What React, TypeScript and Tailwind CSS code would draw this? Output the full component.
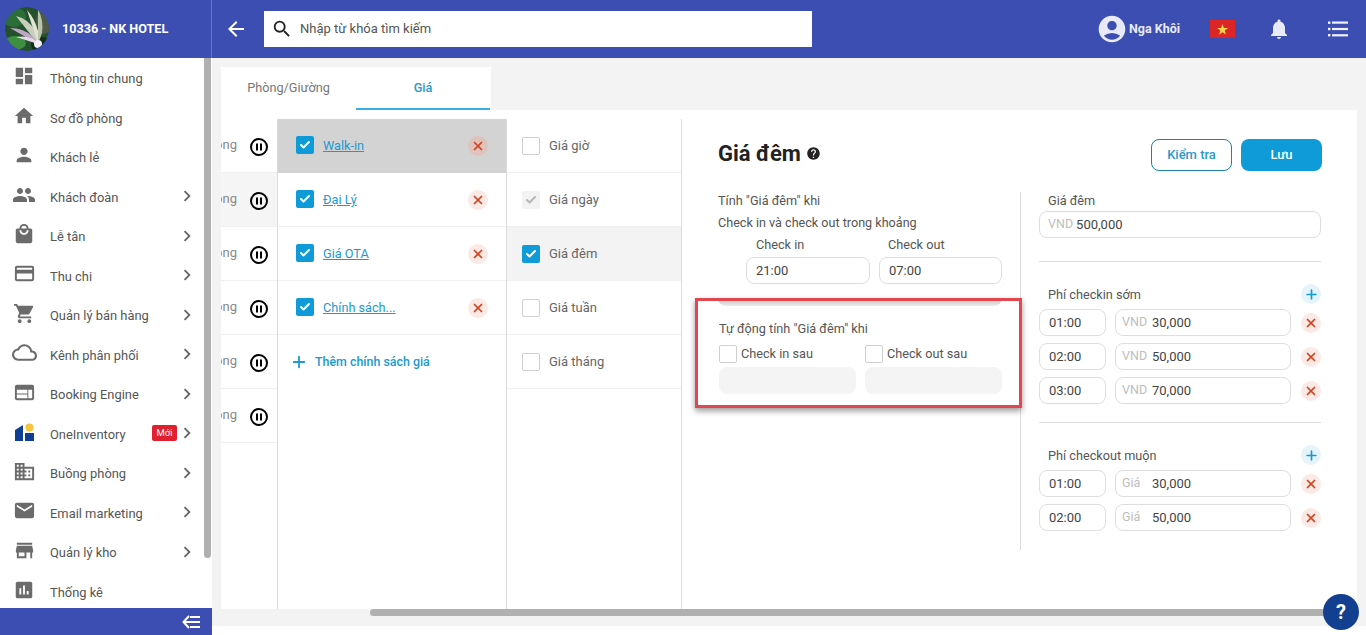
import React from "react";
import {
  MdDashboard, MdHome, MdPerson, MdPeople, MdLocalMall, MdCreditCard, MdShoppingCart,
  MdCloudQueue, MdWeb, MdDomain, MdEmail, MdStore, MdAssessment, MdArrowBack, MdSearch,
  MdAccountCircle, MdNotifications, MdChevronRight, MdHelp,
} from "react-icons/md";
import { Check as CheckIcon, X, Plus } from "lucide-react";

const Inventory = () => (
  <svg width="19" height="18" viewBox="0 0 19 18">
    <path d="M0 7 L8 2 V18 H0 Z" fill="#0f3f94" />
    <rect x="10" y="10" width="9" height="8" fill="#0f3f94" />
    <circle cx="14.5" cy="4.5" r="4" fill="#f6c63c" />
  </svg>
);

const menu: [React.ReactNode, string, boolean][] = [
  [<MdDashboard size={22} />, "Thông tin chung", false],
  [<MdHome size={22} />, "Sơ đồ phòng", false],
  [<MdPerson size={22} />, "Khách lẻ", false],
  [<MdPeople size={24} />, "Khách đoàn", true],
  [<MdLocalMall size={22} />, "Lễ tân", true],
  [<MdCreditCard size={23} />, "Thu chi", true],
  [<MdShoppingCart size={23} />, "Quản lý bán hàng", true],
  [<MdCloudQueue size={25} />, "Kênh phân phối", true],
  [<MdWeb size={23} />, "Booking Engine", true],
  [<Inventory />, "OneInventory", true],
  [<MdDomain size={23} />, "Buồng phòng", true],
  [<MdEmail size={23} />, "Email marketing", true],
  [<MdStore size={23} />, "Quản lý kho", true],
  [<MdAssessment size={22} />, "Thống kê", false],
];

const Avatar = () => (
  <svg width="44" height="44" viewBox="0 0 44 44" className="rounded-full">
    <circle cx="22" cy="22" r="22" fill="#24502c" />
    <ellipse cx="9" cy="10" rx="12" ry="10" fill="#2c6e3a" />
    <ellipse cx="37" cy="38" rx="11" ry="8" fill="#10301a" />
    <ellipse cx="10" cy="36" rx="11" ry="7" fill="#3f8f42" />
    <ellipse cx="39" cy="14" rx="8" ry="13" fill="#4f5a48" />
    <path d="M33 37 L11 9 Q24 12 30 24 Z" fill="#c9cdbe" />
    <path d="M33 37 L22 3 Q30 12 33 24 Z" fill="#dfe3d2" />
    <path d="M33 37 L33 2 Q39 14 37 26 Z" fill="#b9c4ab" />
    <path d="M33 37 L5 21 Q18 21 27 29 Z" fill="#bfa6c6" />
    <path d="M33 37 L11 30 Q22 28 30 33 Z" fill="#e5d6ea" />
    <circle cx="33" cy="37" r="4" fill="#f4eef6" />
  </svg>
);

const Pause = () => (
  <svg width="18" height="18" viewBox="0 0 18 18" className="ml-[13px] mt-[2px] shrink-0" fill="none" stroke="#000" strokeWidth="2">
    <circle cx="9" cy="9" r="8" />
    <path d="M7 5.5 V12.5 M11 5.5 V12.5" />
  </svg>
);

const Check = ({ state = "off" }: { state?: "off" | "on" | "dis" }) => {
  if (state === "on")
    return (
      <span className="flex h-[18px] w-[18px] shrink-0 items-center justify-center rounded-[2px] bg-[#0e9bd8] text-white">
        <CheckIcon size={12} strokeWidth={4} />
      </span>
    );
  if (state === "dis")
    return (
      <span className="flex h-[18px] w-[18px] shrink-0 items-center justify-center rounded-[2px] bg-[#f3f3f3] text-[#b5b5b5]">
        <CheckIcon size={12} strokeWidth={4} />
      </span>
    );
  return <span className="block h-[18px] w-[18px] shrink-0 rounded-[2px] border border-[#cfcfcf] bg-white" />;
};

const XBtn = ({ dark }: { dark?: boolean }) => (
  <span className={`flex h-[20px] w-[20px] shrink-0 items-center justify-center rounded-full text-[#d2431f] ${dark ? "bg-[#e0c2bc]" : "bg-[#fbe9e5]"}`}>
    <X size={14} strokeWidth={3} />
  </span>
);

const PlusBtn = () => (
  <span className="flex h-[20px] w-[20px] items-center justify-center rounded-full bg-[#e5f4fa] text-[#0e9bd8]">
    <Plus size={15} strokeWidth={2.6} />
  </span>
);

const TimeBox = ({ v, w }: { v: string; w: string }) => (
  <div className={`flex h-[27px] shrink-0 items-center rounded-lg border border-[#dedede] bg-white px-[9px] text-[13px] text-[#444] ${w}`}>{v}</div>
);

const FeeRow = ({ t, u, v }: { t: string; u: string; v: string }) => (
  <div className="flex items-center">
    <TimeBox v={t} w="w-[67px]" />
    <div className="ml-[9px] flex h-[27px] w-[177px] items-center rounded-lg border border-[#dedede] bg-white pl-[6px] text-[13px]">
      <span className="w-[30px] text-[12.5px] text-[#bdbdbd]">{u}</span>
      <span className="text-[#444]">{v}</span>
    </div>
    <span className="ml-[10px]"><XBtn /></span>
  </div>
);

const policies = ["Walk-in", "Đại Lý", "Giá OTA", "Chính sách..."];
const prices: [string, "off" | "on" | "dis"][] = [
  ["Giá giờ", "off"], ["Giá ngày", "dis"], ["Giá đêm", "on"], ["Giá tuần", "off"], ["Giá tháng", "off"],
];

export default function App() {
  return (
    <div className="relative flex h-[635px] w-[1366px] flex-col overflow-hidden bg-white font-['Roboto',sans-serif] text-[13px] text-[#555]">
      {/* Top bar */}
      <header className="flex h-[58px] shrink-0 items-center bg-[#3c4eb2] text-white">
        <div className="flex h-full w-[212px] shrink-0 items-center border-r border-[#5f78d6] pl-[5px]">
          <Avatar />
          <span className="ml-[13px] text-[12.6px] font-bold">10336 - NK HOTEL</span>
        </div>
        <div className="ml-[12px]"><MdArrowBack size={24} /></div>
        <div className="ml-[16px] flex h-[36px] w-[548px] items-center bg-white pl-[7px] text-[#555]">
          <MdSearch size={22} className="text-[#222]" />
          <span className="ml-[7px]">Nhập từ khóa tìm kiếm</span>
        </div>
        <div className="ml-auto flex items-center pr-[16px]">
          <MdAccountCircle size={32} className="text-[#e8ebf7]" />
          <span className="ml-px w-[51px] whitespace-nowrap text-[12.5px] font-bold text-[#e8ebf7]">Nga Khôi</span>
          <svg width="25" height="18" viewBox="0 0 25 18" className="ml-[30px]">
            <rect width="25" height="18" fill="#dc2626" />
            <path d="M12.5 4 L13.9 8 L18 8.1 L14.7 10.6 L15.9 14.5 L12.5 12.2 L9.1 14.5 L10.3 10.6 L7 8.1 L11.1 8 Z" fill="#fcd34d" />
          </svg>
          <MdNotifications size={24} className="ml-[32px] text-[#e8ebf7]" />
          <svg width="24" height="24" viewBox="0 0 24 24" className="ml-[35px]" fill="#f1f3fb">
            <rect x="2" y="4.5" width="2.4" height="2.4" />
            <rect x="6" y="4.5" width="16" height="2.2" />
            <rect x="2" y="10.8" width="2.4" height="2.4" />
            <rect x="6" y="10.9" width="16" height="2.2" />
            <rect x="2" y="17" width="2.4" height="2.4" />
            <rect x="6" y="17.2" width="16" height="2.2" />
          </svg>
        </div>
      </header>

      <div className="flex min-h-0 flex-1">
        {/* Sidebar */}
        <aside className="flex w-[212px] shrink-0 flex-col">
          <div className="flex h-[550px] overflow-hidden">
            <nav className="w-[204px] shrink-0">
              {menu.map(([icon, label, more]) => (
                <div key={label} className="flex h-[39.5px] items-center">
                  <span className={`-mt-[3px] ml-[8px] flex w-[32px] shrink-0 justify-center ${label === "OneInventory" ? "" : "text-[#6b6b6b]"}`}>{icon}</span>
                  <span className="ml-[10px] whitespace-nowrap pt-[2px] text-[12.9px] text-[#555]">{label}</span>
                  {label === "OneInventory" && (
                    <span className="-mr-px ml-auto w-[25px] rounded-[2px] bg-[#e0202e] py-[1px] text-center text-[9.5px] leading-[14px] text-white">Mới</span>
                  )}
                  {more && (
                    <MdChevronRight size={22} className={`mr-[6px] text-[#666] ${label === "OneInventory" ? "" : "ml-auto"}`} />
                  )}
                </div>
              ))}
            </nav>
            <div className="h-[500px] w-[7px] rounded-b bg-[#b0b0b0]" />
          </div>
          <div className="flex h-[27px] items-center justify-end bg-[#3c4eb2] pr-[12px]">
            <svg width="18" height="14" viewBox="0 0 18 14" fill="none" stroke="#fff" strokeWidth="2">
              <path d="M7 1 L1.5 7 L7 13" />
              <path d="M2 7 H18" />
              <path d="M8 2 H18 M8 12 H18" />
            </svg>
          </div>
        </aside>

        {/* Main */}
        <main className="flex min-w-0 flex-1 flex-col">
          <div className="flex h-[568px] flex-col bg-[#f3f3f3] pl-[9px] pt-[9px]">
            <div className="flex h-[43px] w-[270px] bg-white text-[12.7px]">
              <div className="flex w-[135px] items-center justify-center pb-[1px] text-[#777]">Phòng/Giường</div>
              <div className="flex w-[134px] items-center justify-center border-b-2 border-[#36b0e0] font-medium text-[#2a9ac8]">Giá</div>
            </div>

            <div className="relative flex h-[499px] w-[1136px] bg-white pt-[9px]">
              {/* Column 1: clipped status */}
              <div className="w-[57px] shrink-0 overflow-hidden border-r border-[#dcdcdc]">
                {[0, 1, 2, 3, 4, 5].map((i) => (
                  <div key={i} className={`flex h-[54px] items-center justify-end border-b border-[#f0f0f0] pr-[9px] ${i === 1 ? "bg-[#f5f5f5]" : ""}`}>
                    <span className="-mt-[2px] shrink-0 whitespace-nowrap text-[#888]">Hoạt động</span>
                    <Pause />
                  </div>
                ))}
              </div>

              {/* Column 2: policies */}
              <div className="w-[229px] shrink-0 border-r border-[#dcdcdc]">
                {policies.map((p, i) => (
                  <div key={p} className={`flex h-[54px] items-center border-b pl-[18px] pr-[18px] ${i === 0 ? "border-[#d3d3d3] bg-[#d3d3d3]" : "border-[#f0f0f0]"}`}>
                    <span className="-mt-[2px]"><Check state="on" /></span>
                    <a className="ml-[9px] text-[12.7px] text-[#1a9ad0] underline">{p}</a>
                    <span className="ml-auto"><XBtn dark={i === 0} /></span>
                  </div>
                ))}
                <div className="flex h-[54px] items-center pl-[12px] text-[#1a9ad0]">
                  <Plus size={18} strokeWidth={2.4} />
                  <span className="ml-[7px] whitespace-nowrap text-[12.4px] font-medium">Thêm chính sách giá</span>
                </div>
              </div>

              {/* Column 3: price types */}
              <div className="w-[175px] shrink-0 border-r border-[#dcdcdc]">
                {prices.map(([label, state]) => (
                  <div key={label} className={`flex h-[54px] items-center border-b border-[#f0f0f0] pl-[15px] text-[#666] ${label === "Giá đêm" ? "bg-[#f3f3f3]" : ""}`}>
                    <Check state={state} />
                    <span className="ml-[9px]">{label}</span>
                  </div>
                ))}
              </div>

              {/* Column 4: form */}
              <div className="relative -mt-[9px] min-w-0 flex-1 pl-[36px]">
                <div className="flex items-center justify-between pr-[35px] pt-[29px]">
                  <div className="-mt-[3px] flex items-center">
                    <h1 className="text-[22px] font-bold leading-[32px] text-[#222]">Giá đêm</h1>
                    <MdHelp size={15} className="ml-[5px] text-[#222]" />
                  </div>
                  <div className="flex gap-[9px]">
                    <button className="h-[32px] w-[81px] rounded-lg border border-[#1b84a6] bg-white font-medium text-[#2a9ac8]">Kiểm tra</button>
                    <button className="h-[32px] w-[81px] rounded-lg bg-[#0e9bd8] font-medium text-white">Lưu</button>
                  </div>
                </div>

                <div className="mt-[21px] flex h-[358px] w-[603px]">
                  {/* Left form */}
                  <div className="w-[303px] shrink-0 border-r border-[#dcdcdc] pr-[18px] text-[12.7px] text-[#555]">
                    <p className="h-[16px] leading-[18px]">Tính "Giá đêm" khi</p>
                    <p className="mt-[6px] h-[16px] whitespace-nowrap text-[12.6px] leading-[18px]">Check in và check out trong khoảng</p>
                    <div className="mt-[6px] flex gap-[9px] pl-[28px]">
                      <div className="w-[124px]">
                        <p className="h-[16px] pl-[10px] leading-[18px]">Check in</p>
                        <div className="mt-[5px]"><TimeBox v="21:00" w="w-[124px]" /></div>
                      </div>
                      <div className="w-[123px]">
                        <p className="h-[16px] pl-[9px] leading-[18px]">Check out</p>
                        <div className="mt-[5px]"><TimeBox v="07:00" w="w-[123px]" /></div>
                      </div>
                    </div>
                    <div className="mt-[14px] h-[8px] rounded-b-lg bg-gradient-to-b from-[#bdbdbd] to-[#ececec]" />
                    <p className="ml-px mt-[14px] h-[16px] leading-[18px]">Tự động tính "Giá đêm" khi</p>
                    <div className="ml-px mt-[9px] flex h-[18px] items-center">
                      <Check />
                      <span className="ml-[4px] w-[124px]">Check in sau</span>
                      <Check />
                      <span className="ml-[4px]">Check out sau</span>
                    </div>
                    <div className="ml-px mt-[4px] flex gap-[9px]">
                      <div className="h-[27px] w-[137px] rounded-lg bg-[#f4f4f4]" />
                      <div className="h-[27px] w-[137px] rounded-lg bg-[#f4f4f4]" />
                    </div>
                  </div>

                  {/* Right form */}
                  <div className="min-w-0 flex-1 pl-[18px] text-[12.7px]">
                    <p className="h-[16px] pl-[9px] leading-[18px]">Giá đêm</p>
                    <div className="mt-[3px] flex h-[27px] items-center rounded-lg border border-[#dedede] pl-[8px] text-[13px]">
                      <span className="text-[12.5px] text-[#bdbdbd]">VND</span>
                      <span className="ml-[3px] text-[#444]">500,000</span>
                    </div>
                    <div className="mt-[23px] h-px bg-[#dcdcdc]" />
                    <div className="mt-[22px] flex h-[20px] items-center justify-between pl-[9px]">
                      <span className="pt-[2px]">Phí checkin sớm</span>
                      <PlusBtn />
                    </div>
                    <div className="mt-[5px] flex flex-col gap-[7px]">
                      <FeeRow t="01:00" u="VND" v="30,000" />
                      <FeeRow t="02:00" u="VND" v="50,000" />
                      <FeeRow t="03:00" u="VND" v="70,000" />
                    </div>
                    <div className="mt-[18px] h-px bg-[#dcdcdc]" />
                    <div className="mt-[22px] flex h-[20px] items-center justify-between pl-[9px]">
                      <span className="pt-[2px]">Phí checkout muộn</span>
                      <PlusBtn />
                    </div>
                    <div className="mt-[5px] flex flex-col gap-[7px]">
                      <FeeRow t="01:00" u="Giá" v="30,000" />
                      <FeeRow t="02:00" u="Giá" v="50,000" />
                    </div>
                  </div>
                </div>

                {/* Annotation box over the form */}
                <div className="pointer-events-none absolute left-[13px] top-[188px] h-[110px] w-[327px] border-[3px] border-[#e2474f] shadow-[0_3px_6px_rgba(0,0,0,0.4)]" />
              </div>
            </div>

            <div className="ml-[149px] h-[7px] w-[960px] shrink-0 rounded bg-[#b0b0b0]" />
          </div>
        </main>
      </div>

      {/* Help bubble */}
      <button className="absolute left-[1323px] top-[594px] flex h-[36px] w-[36px] items-center justify-center rounded-full bg-[#123f8f] text-[20px] font-bold text-white">?</button>
    </div>
  );
}
